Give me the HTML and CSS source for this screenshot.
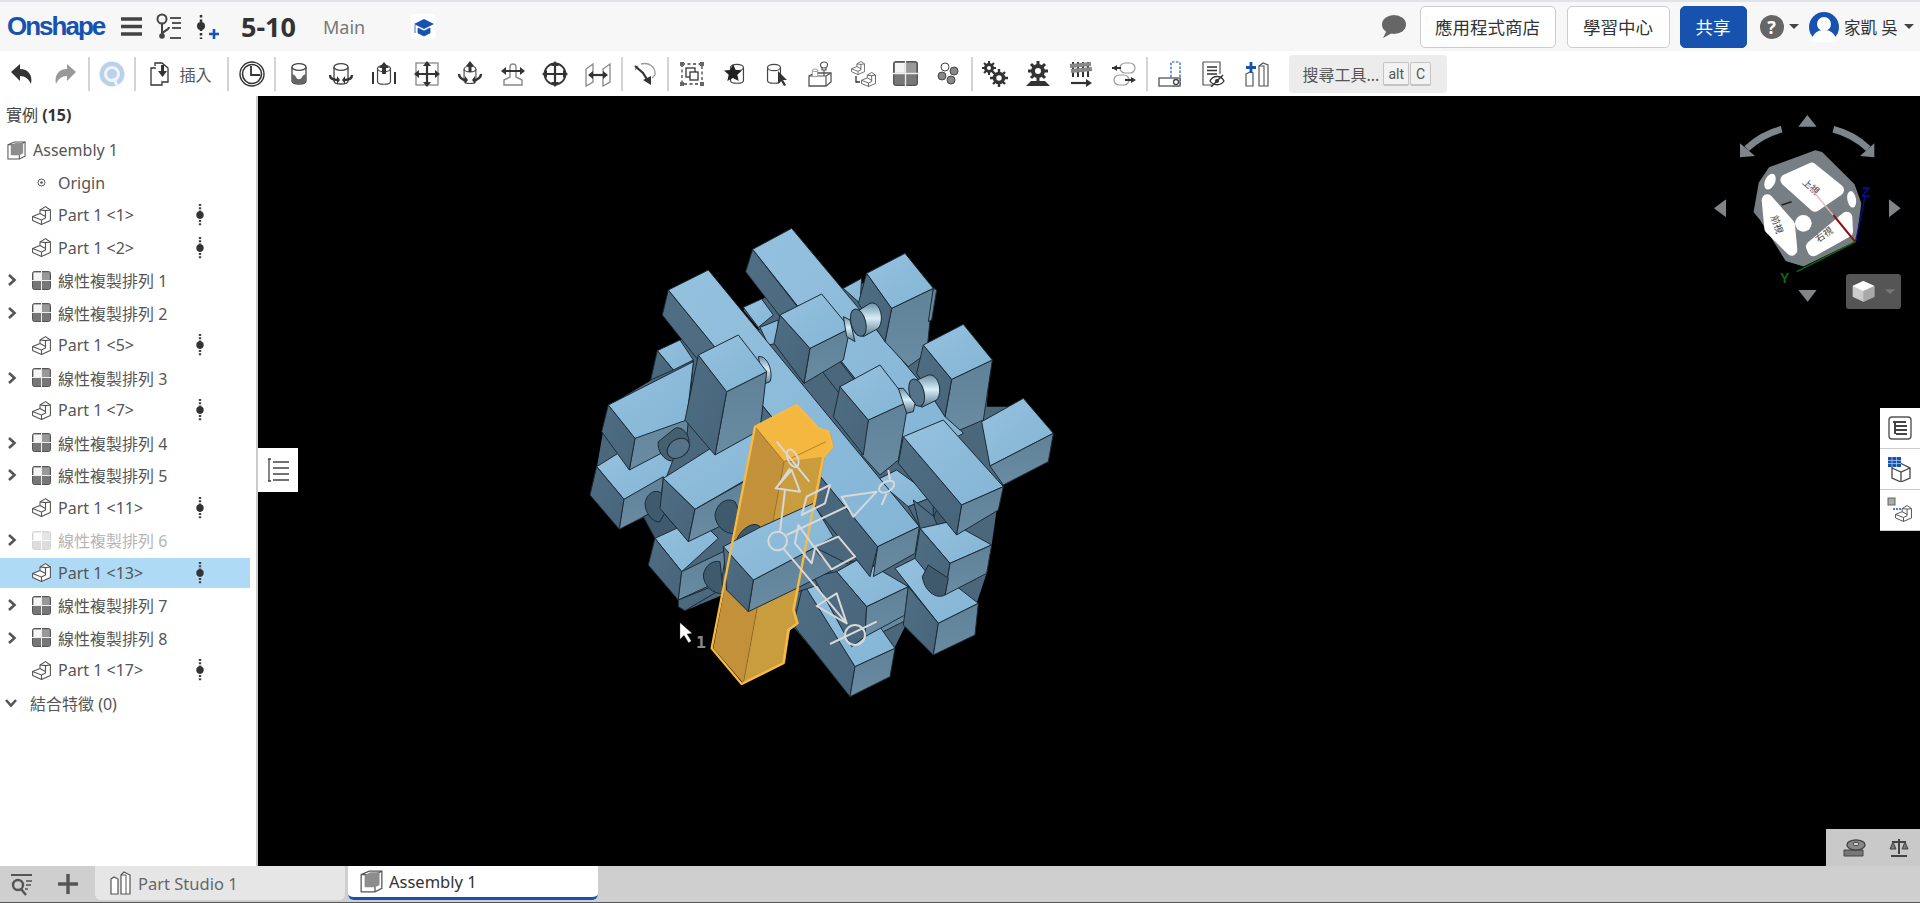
FILE: index.html

```html
<!DOCTYPE html>
<html lang="zh-Hant">
<head>
  <meta charset="UTF-8">
  <title>5-10 | Onshape</title>
  <meta name="viewport" content="width=device-width, initial-scale=1.0">
  <link rel="stylesheet" href="styles.css">
</head>
<body>
  <!-- shared icons -->
  <svg class="defs" width="0" height="0">
    <symbol id="i-part" viewBox="0 0 19 19">
      <path d="M.6 10.500 8 7.500V4L13.500.6 18.400 4v10.500L9.500 18.400.6 14.500z" fill="#fff" stroke="#555" stroke-width="1.100" stroke-linejoin="round"/>
      <path d="M.6 10.500 9.500 14v4.400M9.500 14l4-2V4.600L8 4M13.500 4.600 18.400 4M8 7.500l5.500 3" fill="none" stroke="#555" stroke-width="1.100"/>
    </symbol>
    <symbol id="i-pattern" viewBox="0 0 19 19">
      <rect x=".5" y=".5" width="18" height="18" rx="2" fill="#777" stroke="#555"/>
      <rect x="1.500" y="1.500" width="7.500" height="7.500" fill="#f4f4f4"/>
      <rect x="10" y="1.500" width="7.500" height="7.500" fill="#999"/>
      <path d="M9.500 0v19M0 9.500h19" stroke="#eee" stroke-width="1"/>
    </symbol>
    <symbol id="i-dots" viewBox="0 0 8 24">
      <path d="M4 1v22" stroke="#444" stroke-width="2.400" stroke-dasharray="2 1.200"/>
      <circle cx="4" cy="12" r="3.700" fill="#333"/>
    </symbol>
    <symbol id="i-chev" viewBox="0 0 10 14">
      <path d="M2 2l5.500 5L2 12" fill="none" stroke="#555" stroke-width="2.600"/>
    </symbol>
    <symbol id="i-cyl" viewBox="0 0 26 26">
      <path d="M6 6v14c0 4 14 4 14 0V6" fill="#fff" stroke="#444" stroke-width="1.300"/>
      <ellipse cx="13" cy="6" rx="7" ry="3.400" fill="#fff" stroke="#444" stroke-width="1.300"/>
    </symbol>
    <symbol id="i-asm" viewBox="0 0 20 20">
      <path d="M1 4 8 1h11v15l-6 3H1z" fill="#fff" stroke="#555" stroke-width="1.100"/>
      <path d="M1 4h12v15M13 4l6-3" fill="none" stroke="#555" stroke-width="1.100"/>
      <path d="M4 4.500 9 2h8v11l-4 2H4z" fill="#8d8d8d"/>
    </symbol>
  </svg>

  <header class="topbar">
    <span class="logo">Onshape</span>
    <svg class="ic menu" viewBox="0 0 21 19"><path d="M0 2h21M0 9.500h21M0 17h21" stroke="#444" stroke-width="3.400"/></svg>
    <svg class="ic versions" viewBox="0 0 25 28"><circle cx="6" cy="6" r="4.500" fill="none" stroke="#444" stroke-width="2"/><path d="M6 11v11c0-5 7-4 7-8" fill="none" stroke="#444" stroke-width="2"/><circle cx="6" cy="23" r="2.800" fill="#444"/><path d="M14 5h11M16 10h9M16 15h9M14 25h11" stroke="#555" stroke-width="2"/></svg>
    <svg class="ic insertable" viewBox="0 0 22 28"><path d="M4 2v24" stroke="#333" stroke-width="2.500" stroke-dasharray="2.500 2"/><circle cx="4" cy="13" r="4" fill="#333"/><path d="M17 16v10M12 21h10" stroke="#1652ae" stroke-width="2.600"/></svg>
    <span class="doc-name">5-10</span>
    <span class="branch">Main</span>
    <span class="cap-wrap">
      <svg viewBox="0 0 22 22" width="22" height="22"><path d="M11 3 1 8l10 5 10-5z" fill="#1652ae"/><path d="M5 12v5l6 3 6-3v-5l-6 3zM2 9v8" fill="#1652ae" stroke="#1652ae" stroke-width=".8"/></svg>
    </span>
    <div class="top-right">
      <svg class="chat" viewBox="0 0 24 24"><ellipse cx="12" cy="9.500" rx="12" ry="9.500" fill="#666"/><path d="M5 15 1 23l9-5z" fill="#666"/></svg>
      <button class="btn store">應用程式商店</button>
      <button class="btn learn">學習中心</button>
      <button class="btn share">共享</button>
      <span class="help">?</span>
      <span class="caret"></span>
      <svg class="avatar" viewBox="0 0 30 30"><circle cx="15" cy="15" r="15" fill="#1652ae"/><circle cx="15" cy="12" r="7" fill="#fff"/><path d="M3 30c0-9 6-12 12-12s12 3 12 12z" fill="#fff"/></svg>
      <span class="user">家凱 吳</span>
      <span class="caret"></span>
    </div>
  </header>

  <nav class="toolbar">
    <button class="tool"><svg viewBox="0 0 26 26"><path d="M2 11l9-8v5c8 0 13 6 11 15-2-5-6-8-11-8v5z" fill="#333"/></svg></button>
    <button class="tool"><svg viewBox="0 0 26 26"><path d="M24 11l-9-8v5C7 8 2 14 4 23c2-5 6-8 11-8v5z" fill="#999"/></svg></button>
    <i class="sep"></i>
    <button class="tool"><svg viewBox="0 0 26 26"><circle cx="13" cy="13" r="12.500" fill="#b9d1ea"/><circle cx="13" cy="13" r="6.500" fill="none" stroke="#eef4fa" stroke-width="3"/><path d="M15 17l3 8" stroke="#eef4fa" stroke-width="3"/></svg></button>
    <i class="sep"></i>
    <button class="tool insert">
      <svg viewBox="0 0 26 26"><path d="M4 7h6l5 5v12H4z" fill="#fff" stroke="#333" stroke-width="1.300"/><path d="M8 5V2h7l6 5v14h-6" fill="#fff" stroke="#333" stroke-width="1.300"/><path d="M14 4v6h-3l4.500 6 4.500-6h-3V4z" fill="#333"/></svg>
      <span>插入</span>
    </button>
    <i class="sep"></i>
    <button class="tool"><svg viewBox="0 0 26 26"><circle cx="13" cy="13" r="12" fill="#fff" stroke="#333" stroke-width="1.400"/><circle cx="13" cy="13" r="9.500" fill="none" stroke="#333" stroke-width="1.600"/><path d="M12 5v9h9" fill="none" stroke="#333" stroke-width="1.800"/></svg></button>
    <i class="sep"></i>
    <button class="tool"><svg viewBox="0 0 26 26"><use href="#i-cyl"/><path d="M6 13c2 1 3 1 4 3 1 3 5 3 6 0 1-2 2-2 4-3v7c0 4-14 4-14 0z" fill="#666"/></svg></button>
    <button class="tool"><svg viewBox="0 0 26 26"><use href="#i-cyl"/><path d="M2 14c0 3 3 5 8 5M24 14c0 3-3 5-8 5" fill="none" stroke="#333" stroke-width="2.400"/><path d="M9 15v8l3-4zM17 15v8l-3-4z" fill="#333"/></svg></button>
    <button class="tool"><svg viewBox="0 0 26 26"><use href="#i-cyl" x="1" y="2" width="24" height="24"/><path d="M13 1l5 6h-3v6h-4V7H8z" fill="#333"/><path d="M2 11v12M24 11v12" stroke="#333" stroke-width="2"/></svg></button>
    <button class="tool"><svg viewBox="0 0 26 26"><rect x="2" y="2" width="22" height="22" fill="#fff" stroke="#888" stroke-width="1.300"/><path d="M13 4v18M4 13h18" stroke="#333" stroke-width="2.200"/><path d="M13 0l4 5H9zM13 26l4-5H9zM0 13l5-4v8zM26 13l-5-4v8z" fill="#333"/></svg></button>
    <button class="tool"><svg viewBox="0 0 26 26"><use href="#i-cyl" x="2" y="3" width="22" height="22"/><path d="M13 0l4 5h-2.500v6h-3V5H9z" fill="#333"/><path d="M2 13c0 3 3 6 7 6M24 13c0 3-3 6-7 6" fill="none" stroke="#333" stroke-width="2.400"/><path d="M8 15v8l3-4zM18 15v8l-3-4z" fill="#333"/></svg></button>
    <button class="tool"><svg viewBox="0 0 26 26"><path d="M10 16V6a3 3 0 0 1 6 0v10l6 3v5H4v-5z" fill="#fff" stroke="#888" stroke-width="1.400"/><path d="M3 10h20" stroke="#333" stroke-width="2"/><path d="M1 10l5-4v8zM25 10l-5-4v8z" fill="#333"/></svg></button>
    <button class="tool"><svg viewBox="0 0 26 26"><circle cx="13" cy="13" r="10.500" fill="none" stroke="#333" stroke-width="1.800"/><path d="M13 3v20M3 13h20" stroke="#333" stroke-width="2.200"/><path d="M13 0l4 5H9zM13 26l4-5H9zM0 13l5-4v8zM26 13l-5-4v8z" fill="#333"/></svg></button>
    <button class="tool"><svg viewBox="0 0 26 26"><path d="M1 8l7-5v18l-7 4zM25 3l-7 5v17l7-4z" fill="#fff" stroke="#888" stroke-width="1.300"/><path d="M6 14h14" stroke="#333" stroke-width="2.200"/><path d="M3 14l5-4v8zM23 14l-5-4v8z" fill="#333"/></svg></button>
    <i class="sep"></i>
    <button class="tool"><svg viewBox="0 0 26 26"><path d="M9 3c8-2 15 3 14 11l-3 3M6 5 3 9" fill="none" stroke="#999" stroke-width="1.300"/><path d="M3 5l8 7 5 8" fill="none" stroke="#333" stroke-width="2.200"/><path d="M11 19l8 5 0-9z" fill="#333"/></svg></button>
    <i class="sep"></i>
    <button class="tool"><svg viewBox="0 0 26 26"><rect x="3" y="3" width="20" height="20" fill="none" stroke="#444" stroke-width="1.300" stroke-dasharray="3 2.500"/><path d="M1 1h4v4H1zM21 1h4v4h-4zM1 21h4v4H1zM21 21h4v4h-4z" fill="#666"/><rect x="7" y="7" width="9" height="9" fill="#fff" stroke="#333" stroke-width="1.300"/><rect x="11" y="11" width="8" height="8" fill="#fff" stroke="#333" stroke-width="1.300"/></svg></button>
    <button class="tool"><svg viewBox="0 0 26 26"><use href="#i-cyl" x="3" y="0" width="24" height="26"/><path d="M11 3l2.700 6 6.300.600-4.700 4.200 1.400 6.200L11 17l-5.700 3 1.400-6.200L2 9.600 8.300 9z" fill="#222"/></svg></button>
    <button class="tool"><svg viewBox="0 0 26 26"><use href="#i-cyl" x="-2" y="0" width="24" height="26"/><path d="M14 10l0 13 3-3 3 5 2-1-3-5h4z" fill="#333"/></svg></button>
    <button class="tool"><svg viewBox="0 0 26 26"><path d="M2 15l6-3h16v9l-5 4H2z" fill="#fff" stroke="#555" stroke-width="1.300"/><path d="M2 15h17v10M19 15l5-3" fill="none" stroke="#555" stroke-width="1.200"/><use href="#i-cyl" x="3" y="7" width="10" height="10"/><ellipse cx="17" cy="4" rx="3.500" ry="3" fill="#fff" stroke="#555" stroke-width="1.200"/><path d="M15 6v3h4V6M17 9v6" fill="none" stroke="#555" stroke-width="1.200"/></svg></button>
    <button class="tool"><svg viewBox="0 0 26 26"><use href="#i-part" x="1" y="0" width="14" height="14"/><use href="#i-part" x="11" y="11" width="15" height="15"/><path d="M6 15v6h4" fill="none" stroke="#333" stroke-width="1.300"/></svg></button>
    <button class="tool"><svg viewBox="0 0 26 26"><use href="#i-pattern" width="25" height="25"/></svg></button>
    <button class="tool"><svg viewBox="0 0 26 26"><circle cx="9" cy="6" r="4" fill="#fff" stroke="#444"/><circle cx="18" cy="10" r="4" fill="#888" stroke="#444"/><circle cx="6" cy="15" r="4" fill="#888" stroke="#444"/><circle cx="15" cy="19" r="4" fill="#888" stroke="#444"/></svg></button>
    <i class="sep"></i>
    <button class="tool"><svg viewBox="0 0 26 26"><g fill="none" stroke="#333"><circle cx="7" cy="7" r="3.500" stroke-width="3"/><path d="M7 0v3M7 11v3M0 7h3M11 7h3M2 2l2 2M10 10l2 2M12 2l-2 2M4 10l-2 2" stroke-width="2"/><circle cx="17" cy="17" r="4.500" stroke-width="3.600"/><path d="M17 8v3M17 23v3M8 17h3M23 17h3M11 11l2 2M21 21l2 2M23 11l-2 2M13 21l-2 2" stroke-width="2.400"/></g></svg></button>
    <button class="tool"><svg viewBox="0 0 26 26"><g fill="none" stroke="#333"><circle cx="13" cy="10" r="5" stroke-width="4"/><path d="M13 0v4M13 16v4M3 10h4M19 10h4M6 3l3 3M17 14l3 3M20 3l-3 3M9 14l-3 3" stroke-width="3"/></g><path d="M1 25l5-5h14l5 5z" fill="#333"/></svg></button>
    <button class="tool"><svg viewBox="0 0 26 26"><path d="M5 1v15M10 1v15M15 1v15M20 1v15" stroke="#333" stroke-width="2"/><path d="M2 5l21-2M3 10l21-2" stroke="#888" stroke-width="4"/><path d="M3 22h16" stroke="#333" stroke-width="2.200"/><path d="M24 22l-6-4v8z" fill="#333"/></svg></button>
    <button class="tool"><svg viewBox="0 0 26 26"><rect x="9" y="2" width="15" height="10" rx="5" fill="#fff" stroke="#999" stroke-width="1.200"/><rect x="3" y="14" width="15" height="10" rx="5" fill="#fff" stroke="#999" stroke-width="1.200"/><path d="M1 7h9M14 19h9" stroke="#333" stroke-width="2"/><path d="M1 7l5-3v6zM25 19l-5-3v6z" fill="#333"/></svg></button>
    <i class="sep"></i>
    <button class="tool"><svg viewBox="0 0 26 26"><rect x="13" y="1" width="9" height="24" rx="1" fill="none" stroke="#1652ae" stroke-width="1.200" stroke-dasharray="2.500 1.500"/><rect x="1" y="17" width="21" height="8" fill="#fff" stroke="#555" stroke-width="1.300"/><circle cx="18" cy="21" r="2.500" fill="none" stroke="#444" stroke-width="1.300"/></svg></button>
    <button class="tool"><svg viewBox="0 0 26 26"><path d="M3 1h17v12M3 1v23h9" fill="#fff" stroke="#555" stroke-width="1.200"/><path d="M7 6h10M7 9.500h10M7 13h10" stroke="#333" stroke-width="1.500"/><path d="M10 20c3-6 11-6 14 0-3 5-11 5-14 0z" fill="#fff" stroke="#333" stroke-width="1.300"/><circle cx="17" cy="20" r="2" fill="#333"/><path d="M11 26l12-12" stroke="#333" stroke-width="1.400"/></svg></button>
    <button class="tool"><svg viewBox="0 0 26 26"><path d="M16 5l4-3 5 2v21h-9z" fill="#fff" stroke="#555" stroke-width="1.200"/><path d="M3 13l4-2 3 1v13H3z" fill="#fff" stroke="#555" stroke-width="1.200"/><path d="M16 5h5v20" fill="none" stroke="#555" stroke-width="1.100"/><path d="M8 1v11M3 6.500h10" stroke="#1652ae" stroke-width="2.800"/></svg></button>
    <div class="search">
      <span>搜尋工具...</span>
      <kbd>alt</kbd><kbd class="key-c">C</kbd>
    </div>
  </nav>

  <main class="workspace">
    <aside class="panel">
      <div class="panel-title">實例 <b>(15)</b></div>
      <div class="row row-top"><span></span><svg class="tree-ic"><use href="#i-asm"/></svg><span>Assembly 1</span></div>
      <div class="row"><span></span><svg class="tree-ic" viewBox="0 0 19 19"><circle cx="9.500" cy="9.500" r="3.500" fill="none" stroke="#555"/><circle cx="9.500" cy="9.500" r="1.300" fill="#555"/></svg><span>Origin</span></div>
      <div class="row"><span></span><svg class="tree-ic"><use href="#i-part"/></svg><span>Part 1 &lt;1&gt;</span><svg class="dots"><use href="#i-dots"/></svg></div>
      <div class="row"><span></span><svg class="tree-ic"><use href="#i-part"/></svg><span>Part 1 &lt;2&gt;</span><svg class="dots"><use href="#i-dots"/></svg></div>
      <div class="row"><svg class="chev"><use href="#i-chev"/></svg><svg class="tree-ic"><use href="#i-pattern"/></svg><span>線性複製排列 1</span></div>
      <div class="row"><svg class="chev"><use href="#i-chev"/></svg><svg class="tree-ic"><use href="#i-pattern"/></svg><span>線性複製排列 2</span></div>
      <div class="row"><span></span><svg class="tree-ic"><use href="#i-part"/></svg><span>Part 1 &lt;5&gt;</span><svg class="dots"><use href="#i-dots"/></svg></div>
      <div class="row"><svg class="chev"><use href="#i-chev"/></svg><svg class="tree-ic"><use href="#i-pattern"/></svg><span>線性複製排列 3</span></div>
      <div class="row"><span></span><svg class="tree-ic"><use href="#i-part"/></svg><span>Part 1 &lt;7&gt;</span><svg class="dots"><use href="#i-dots"/></svg></div>
      <div class="row"><svg class="chev"><use href="#i-chev"/></svg><svg class="tree-ic"><use href="#i-pattern"/></svg><span>線性複製排列 4</span></div>
      <div class="row"><svg class="chev"><use href="#i-chev"/></svg><svg class="tree-ic"><use href="#i-pattern"/></svg><span>線性複製排列 5</span></div>
      <div class="row"><span></span><svg class="tree-ic"><use href="#i-part"/></svg><span>Part 1 &lt;11&gt;</span><svg class="dots"><use href="#i-dots"/></svg></div>
      <div class="row row-off"><svg class="chev"><use href="#i-chev"/></svg><svg class="tree-ic"><use href="#i-pattern"/></svg><span>線性複製排列 6</span></div>
      <div class="row row-sel"><span></span><svg class="tree-ic"><use href="#i-part"/></svg><span>Part 1 &lt;13&gt;</span><svg class="dots"><use href="#i-dots"/></svg></div>
      <div class="row"><svg class="chev"><use href="#i-chev"/></svg><svg class="tree-ic"><use href="#i-pattern"/></svg><span>線性複製排列 7</span></div>
      <div class="row"><svg class="chev"><use href="#i-chev"/></svg><svg class="tree-ic"><use href="#i-pattern"/></svg><span>線性複製排列 8</span></div>
      <div class="row"><span></span><svg class="tree-ic"><use href="#i-part"/></svg><span>Part 1 &lt;17&gt;</span><svg class="dots"><use href="#i-dots"/></svg></div>
      <div class="row row-mates"><svg class="chev chev-down"><use href="#i-chev"/></svg><span>結合特徵 (0)</span></div>
    </aside>

    <section class="viewport">
      <button class="list-tab"><svg viewBox="0 0 22 24" width="22" height="24"><path d="M1 1h3M1 23h3M2 1v22M6 4h16M6 10h16M6 16h16M6 22h16" stroke="#444" stroke-width="1.300" fill="none"/></svg></button>

      <svg class="scene" viewBox="0 0 1662 770">
        <defs>
          <linearGradient id="g-top" x1="0" y1="0" x2="1" y2="1"><stop offset="0" stop-color="#94c1de"/><stop offset="1" stop-color="#84b5d5"/></linearGradient>
          <linearGradient id="g-lf" x1="0" y1="0" x2="1" y2="1"><stop offset="0" stop-color="#4f6e83"/><stop offset="1" stop-color="#47647a"/></linearGradient>
          <linearGradient id="g-rt" x1="0" y1="0" x2="0" y2="1"><stop offset="0" stop-color="#5f8299"/><stop offset="1" stop-color="#6a8ca2"/></linearGradient>
          <linearGradient id="g-cyl" x1="0" y1="0" x2="0" y2="1"><stop offset="0" stop-color="#6d93ab"/><stop offset=".45" stop-color="#d8eef8"/><stop offset="1" stop-color="#55768c"/></linearGradient>
        </defs>
        <g transform="translate(322 124) scale(.33333)">
          <!-- fills the pockets between parts -->
          <path class="backing" d="M540 330 490 270 560 230 640 240 850 190 1050 220 1030 390 1130 330 1230 420 1220 560 1330 560 1400 700 1270 780 1250 870 1235 975 1220 1060 1190 1150 1060 1300 985 1200 945 1280 930 1360 810 1420 640 1220 620 1180 440 1120 320 1170 295 1140 205 1035 225 955 240 870 120 925 35 825 50 745 70 630 90 555 215 480 232 392 300 360z"/>

          <!-- low parts, coordinates shifted down by 660 -->
          <g transform="translate(0 660)">
            <path class="top" d="M890 120l60-30 110 80-75 30z"/>
            <path class="lf" d="M985 200l75-30v80l-40 15z"/>
            <path class="lf" d="M1000 180l130 105-20 85-90-105z"/>
            <path class="rt" d="M800 390l190 50-10 100-140 70-60-80z"/>
            <path class="dk" d="M1062 230c10 40 50 70 75 50l10-60-70-30zM1027 410c5 40 40 70 68 55l10-50-60-40zM810 365c0 30 40 55 75 42l-10-50zM775 555c0 20 10 35 25 40l30-50z"/>
            <path class="top" d="M660 430l120-40 165 235-120 55z"/><path class="lf" d="M640 555l30-125 155 250-15 90z"/><path class="rt" d="M825 680l-15 90 120-60 15-85z"/>
            <path class="lf" d="M640 290l240 120-80-10-100 40-60 20z"/>
            <path class="dk" d="M810 365c0 30 40 55 75 42l-10-50z"/>
            <path class="top" d="M770 395l70-40 145 85-125 60z"/><path class="lf" d="M700 410l70-15 90 105-5 90-40 30z"/><path class="rt" d="M860 500l-5 90 120-65 10-85z"/>
            <path class="top" d="M945 385l70-35 180 140-120 60z"/><path class="lf" d="M985 440l-15 115 90 90 15-95z"/><path class="rt" d="M1075 550l-15 95 125-60 10-95z"/>
            <path class="top" d="M1020 265l90-20 125 70-125 55z"/><path class="lf" d="M1020 265l-15 90 90 110 15-95z"/><path class="rt" d="M1110 370l-15 95 125-65 15-85z"/>
            <path class="dk" d="M1027 410c5 40 40 70 68 55l10-50-60-40z"/>
            <path class="top" d="M50 80l80-50h160l-30 80-128 68z"/><path class="lf" d="M50 80 30 165l88 103 14-90z"/><path class="rt" d="M132 178l-14 90 122-63 10-95z"/>
            <path class="dk" d="M240 205l85 100-100-10-35-65z"/>
            <path class="dk" d="M195 190c5-30 30-45 50-30l20 40-25 45c-20 5-45-25-45-55z"/>
            <path class="top" d="M225 295l130-60 60 60-110 100z"/><path class="lf" d="M225 295l-20 80 90 105 10-85z"/><path class="rt" d="M305 395l-10 85 130-60 15-90z"/>
            <path class="lf" d="M295 480l125-50v20l-105 62-20-12z"/>
            <path class="dk" d="M370 405c5-30 30-45 50-40l10 95c-30 5-60-25-60-55z"/>
            <path class="top" d="M250 115 400 20l140-60 60 100-255 148z"/><path class="lf" d="M250 115l-10 90 85 100 20-97z"/><path class="rt" d="M345 208l-20 97 165-80 20-110z"/>
            <path class="dk" d="M405 225c5-35 35-55 60-40l20 45-20 50c-30 5-60-25-60-55z"/>
          </g>

          <!-- back bars -->
          <path class="top" d="M790 205l55-30-5 75z"/>
          <path class="top" d="M490 262l55-25 35 48-45 37zM540 322l55-22-5 70-25 5z"/>
          <path class="lf" d="M518 88l-21 67 353 460 20-75z"/>
          <path class="top" d="M518 88 635 25l515 615-135 75z"/>
          <path class="top" d="M232 392l68-32 40 60-60 30z"/><path class="lf" d="M232 392l-20 88 68-30z"/>
          <path class="rt" d="M935 265l-20 100 70 75 55-40 20-195z"/><path class="lf" d="M860 160l-25 90 80 115 20-100z"/><path class="top" d="M860 160 975 100l85 105-125 60z"/>
          <path class="rt" d="M1060 205l10 5-15 90-10 5z"/>
          <path class="cyl" d="M815 285l55-35c30-10 45 50 25 75l-45 25z"/>
          <ellipse class="cyl-end" cx="835" cy="308" rx="22" ry="42" transform="rotate(-15 835 308)"/>

          <!-- main long bars -->
          <path class="lf" d="M265 210l-18 75 623 785 23-90z"/>
          <path class="top" d="M265 210 385 150l633 770-125 60z"/>
          <path class="rt" d="M893 980l-13 90 125-70 13-80z"/>
          <path class="top" d="M1205 605l125-70 90 105-190 98z"/><path class="rt" d="M1420 640l-15 85-135 70-40-57z"/>
          <path class="lf" d="M970 650l-15 80 175 215 15-90z"/>
          <path class="top" d="M970 650l120-50 180 200-125 55z"/>
          <path class="rt" d="M1145 855l-15 90 125-75 15-70z"/>

          <!-- posts and pins -->
          <path class="rt" d="M690 385l-18 105 118-70 20-95z"/><path class="lf" d="M600 285l-18 85 90 120 18-105z"/><path class="top" d="M600 285 725 222l85 103-120 60z"/>
          <path class="cyl" d="M810 300l-20-10 10 60 25 15z"/>
          <path class="rt" d="M1115 478l-20 112 45 40 70-30 27-180z"/><path class="lf" d="M1030 375l-20 85 85 130 20-112z"/><path class="top" d="M1030 375l120-62 87 107-122 58z"/>
          <path class="cyl" d="M990 490l55-25c30-5 45 50 25 75l-45 22z"/>
          <ellipse class="cyl-end" cx="1010" cy="518" rx="22" ry="42" transform="rotate(-15 1010 518)"/>
          <path class="rt" d="M865 600l-20 105 55 60 55-45 30-175z"/><path class="lf" d="M780 500l-20 90 90 115 15-105z"/><path class="top" d="M780 500l120-65 85 110-120 55z"/>
          <path class="cyl" d="M970 505l-15 0 25 75 20-5 5-25z"/>

          <path class="cyl" d="M535 410c30-5 45 50 35 75l-20 8z"/>
          <path class="rt" d="M165 655l-17 95 172-90 20-240z"/><path class="lf" d="M85 555 65 635l83 115 17-95z"/><path class="top" d="M85 555 340 425l-20 175-155 55z"/>
          <path class="rt" d="M440 515l-35 190 135-75 20-175z"/><path class="lf" d="M355 405l-40 195 90 105 35-190z"/><path class="top" d="M355 405l120-60 85 110-120 60z"/>
          <path class="cyl-dk" d="M235 665l50-40c25-10 50 30 40 50l-50 48c-20 0-45-30-40-58z"/>
          <ellipse class="cyl-end" cx="295" cy="685" rx="36" ry="27" transform="rotate(-35 295 685)"/>

          <!-- selected part -->
          <path class="sel-front" d="M612 725 490 1390l125-60 15-100 27-20-12-40 90-460 27-30-12-45-30-10-82 100z"/>
          <path class="sel-side" d="M525 620 400 1285l90 105 122-665z"/>
          <path class="sel-top" d="M525 620 650 555l65 70 30 10 12 45-27 30-118 15z"/>
          <path class="sel-edge" d="M525 620l87 105 126-60M612 725 490 1390"/>

          <!-- bar crossing over the selected part -->
          <g transform="translate(0 660)">
            <path class="dk" d="M470 300c10-30 50-60 70-40l-20 40-60 30z"/>
            <path class="rt" d="M520 420l-15 95 135-65 120-60-60-65z"/>
            <path class="lf" d="M430 320l10 130 65 65 15-95z"/>
            <path class="top" d="M430 320l110-58 160-72 60 100-60 35-180 95z"/>
          </g>
          <path class="sel-outline" d="M525 620l125-65 65 70 30 10 12 45-27 30-90 460 12 40-27 20-15 100-125 62-90-107z"/>

          <!-- manipulator and cursor -->
          <g transform="translate(0 660)">
            <g class="gizmo">
              <circle cx="593" cy="303" r="28"/>
              <path d="M600 275l15-125M635 90l25 65-73-10zM590 5l98 120M630 85l-35 50"/>
              <ellipse cx="638" cy="55" rx="15" ry="28" transform="rotate(-25 638 55)"/>
              <path d="M620 285l180-85M785 170l105-15-70 75zM925 90l5 30M905 195l15-35"/>
              <ellipse cx="920" cy="140" rx="25" ry="15" transform="rotate(-30 920 140)"/>
              <path d="M610 325l190 225M770 460l-60 38 90 52zM750 612l140-67"/>
              <circle cx="825" cy="585" r="30"/>
              <path d="M680 170l70-35-15 55-70 35zM705 320l70-30 50 60-70 38zM655 255l50 70-10 45-50-60z"/>
            </g>
            <path class="cursor" d="M300 548v50l12-12 14 22 8-5-13-21 15-2z"/>
            <text class="cursor-num" x="348" y="624">1</text>
          </g>
        </g>
      </svg>

      <svg class="cube-nav" viewBox="0 0 690 660">
        <g class="nav-arrow">
          <path d="M352 45l-27 35h55zM325 570h55l-27 35zM72 325l36-27v54zM632 325l-35-27v54zM150 130v42l45-4zM553 130v42l-43-4z"/>
          <path class="nav-curve" d="M275 88c-40 10-75 30-105 58M430 88c40 10 75 30 105 58"/>
        </g>
        <path class="cube-body" d="M240 205l135-50 20 5 95 95 20 55-15 110-155 75-50-15-75-120-20-25 15-85z"/>
        <g class="cube-face">
          <path d="M288 240l77-35 80 65-70 48zM232 300l66 75 7 75-65-65zM365 440l105-88 2 43-102 57z"/>
        </g>
        <g class="cube-dot">
          <circle cx="340" cy="370" r="25"/>
          <ellipse cx="240" cy="245" rx="15" ry="25" transform="rotate(25 240 245)"/>
          <ellipse cx="485" cy="298" rx="13" ry="25" transform="rotate(-10 485 298)"/>
        </g>
        <path d="M275 315l30-10" stroke="#222" stroke-width="5"/>
        <text class="face-text" transform="translate(335 250) rotate(40)">上視</text>
        <text class="face-text" transform="translate(242 350) rotate(70)">前視</text>
        <text class="face-text" transform="translate(385 428) rotate(-35)">右視</text>
        <path d="M350 250l100 120" stroke="#e8b6b6" stroke-width="4"/>
        <path d="M430 345l65 80" stroke="#8a1414" stroke-width="6"/>
        <path d="M497 425l28-135" stroke="#0a0a96" stroke-width="4"/>
        <path d="M497 425l-177 90" stroke="#0b6b0b" stroke-width="4"/>
        <text class="axis axis-z" x="515" y="290">Z</text>
        <text class="axis axis-y" x="270" y="550">Y</text>
        <rect x="468" y="522" width="165" height="105" rx="10" fill="#555"/>
        <path d="M520 543l33 15v32l-33 15-32-15v-32z" fill="#ccc"/>
        <path d="M520 543l33 15-33 15-32-15z" fill="#fff"/>
        <path d="M520 573l33-15v32l-33 15z" fill="#a9a9a9"/>
        <path d="M585 568h30l-15 14z" fill="#777"/>
      </svg>

      <div class="side-tabs">
        <button class="side-tab"><svg viewBox="0 0 24 24" width="24" height="24"><rect x="1" y="1" width="22" height="22" rx="3" fill="none" stroke="#555" stroke-width="1.400"/><path d="M5 6h13M8 10h11M8 14h11M8 18h11M7 6v12" stroke="#444" stroke-width="2"/></svg></button>
        <button class="side-tab"><svg viewBox="0 0 26 26" width="26" height="26"><path d="M13 7l10 5v10l-9 4-9-4V11z" fill="#fff" stroke="#444" stroke-width="1.300"/><path d="M5 12l9 4 9-4M14 16v10" fill="none" stroke="#444" stroke-width="1.300"/><rect x="1" y="1" width="13" height="10" fill="#1652ae"/><path d="M1 4.500h13M1 7.500h13M5 1v10M9.500 1v10" stroke="#a9c4ea" stroke-width=".8"/></svg></button>
        <button class="side-tab"><svg viewBox="0 0 26 26" width="26" height="26"><rect x="1" y="1" width="7" height="7" fill="#aaa" stroke="#666"/><path d="M6 12h10" stroke="#4d7fcf" stroke-width="2" stroke-dasharray="2 1"/><use href="#i-part" x="8" y="8" width="17" height="17"/></svg></button>
      </div>

      <div class="measure">
        <svg viewBox="0 0 24 18" width="24" height="18"><path d="M2 11h19v6H2z" fill="#777" stroke="#444"/><ellipse cx="14" cy="6" rx="9" ry="5" fill="#888" stroke="#444" stroke-width="1.400"/><ellipse cx="14" cy="5" rx="3" ry="1.600" fill="#ddd" stroke="#444"/></svg>
        <svg viewBox="0 0 20 20" width="20" height="20"><path d="M10 1v15M3 4h14M2 18h16" stroke="#444" stroke-width="2"/><path d="M4 4 1 11h6zM16 4l-3 7h6z" fill="#777" stroke="#444"/></svg>
      </div>
    </section>
  </main>

  <footer class="tabbar">
    <svg class="tab-tool" viewBox="0 0 21 22" width="21" height="22"><path d="M0 1h21" stroke="#555" stroke-width="2"/><circle cx="7" cy="11" r="5" fill="none" stroke="#555" stroke-width="2.400"/><path d="M10 15l5 6" stroke="#555" stroke-width="2.400"/><path d="M15 7h6M15 11h5M14 15h3" stroke="#555" stroke-width="1.600"/></svg>
    <svg class="tab-plus" viewBox="0 0 20 20" width="20" height="20"><path d="M10 0v20M0 10h20" stroke="#555" stroke-width="3.400"/></svg>
    <div class="tab">
      <svg viewBox="0 0 22 24" width="22" height="24"><path d="M1 8l3-2 4 2v15H1zM11 4l3-3 6 3v19h-9z" fill="#fff" stroke="#555" stroke-width="1.200"/><path d="M11 4h5v19" fill="none" stroke="#555"/></svg>
      <span>Part Studio 1</span>
    </div>
    <div class="tab tab-active">
      <svg viewBox="0 0 20 20" width="23" height="23"><use href="#i-asm"/></svg>
      <span>Assembly 1</span>
    </div>
  </footer>
</body>
</html>
```

FILE: styles.css

```css
* { box-sizing: border-box; }
html, body { height: 100%; }
body {
  margin: 0;
  overflow: hidden;
  display: flex;
  flex-direction: column;
  font-family: "Noto Sans", "Noto Sans CJK TC", sans-serif;
  font-size: 14px;
  color: #555;
  background: #fff;
}
button { font: inherit; cursor: pointer; }
.defs { position: absolute; }

/* top bar */
.topbar {
  height: 51px;
  flex: none;
  display: flex;
  align-items: center;
  background: #f7f7f7;
  border-top: 2px solid #e2e3e8;
  padding-left: 7px;
}
.logo {
  width: 104px;
  font-family: "Liberation Sans", sans-serif;
  font-weight: bold;
  font-size: 26px;
  letter-spacing: -2px;
  color: #1652ae;
}
.ic { flex: none; }
.menu { width: 21px; height: 19px; margin: 0 0 0 10px; }
.versions { width: 25px; height: 28px; margin-left: 14px; }
.insertable { width: 22px; height: 28px; margin-left: 16px; }
.doc-name { width: 82px; margin-left: 22px; font-size: 27px; font-weight: bold; color: #333; }
.branch { width: 88px; font-size: 18px; color: #777; }
.cap-wrap {
  width: 25px;
  height: 25px;
  display: flex;
  align-items: center;
  justify-content: center;
  background: #fff;
  border-radius: 3px;
}
.top-right { margin-left: auto; display: flex; align-items: center; padding-right: 6px; }
.chat { width: 24px; height: 24px; margin-right: 14px; }
.btn {
  height: 42px;
  padding: 0;
  border: 1px solid #ccc;
  border-radius: 5px;
  background: #fff;
  color: #333;
  font-size: 17.500px;
}
.store { width: 136px; margin-right: 11px; }
.learn { width: 103px; margin-right: 10px; }
.share { width: 67px; background: #1652ae; border-color: #1652ae; color: #fff; margin-right: 13px; }
.help {
  width: 24px;
  height: 24px;
  border-radius: 50%;
  background: #666;
  color: #fff;
  font-weight: bold;
  font-size: 18px;
  line-height: 24px;
  text-align: center;
  margin-right: 5px;
}
.caret {
  width: 0;
  height: 0;
  border-left: 5px solid transparent;
  border-right: 5px solid transparent;
  border-top: 5px solid #444;
}
.avatar { width: 30px; height: 30px; margin: 0 5px 0 10.500px; }
.user { width: 60px; color: #333; font-size: 16.500px; white-space: nowrap; }

/* toolbar */
.toolbar {
  height: 45px;
  flex: none;
  display: flex;
  align-items: center;
  padding-left: 1px;
  background: #fff;
}
.tool {
  flex: none;
  width: 42.800px;
  height: 36px;
  padding: 0;
  border: 0;
  background: none;
  display: flex;
  align-items: center;
  justify-content: center;
}
.tool svg { width: 26px; height: 26px; }
.insert { width: 89px; justify-content: flex-start; padding-left: 10px; color: #555; font-size: 16px; }
.insert span { margin-left: 6px; }
.sep { flex: none; width: 2px; height: 34px; margin: 0 1px; background: #d4d4d4; }
.search {
  flex: none;
  width: 158px;
  height: 38px;
  margin-left: 11px;
  padding-left: 14px;
  display: flex;
  align-items: center;
  background: #ececec;
  border-radius: 4px;
  font-size: 16px;
  color: #555;
  white-space: nowrap;
}
kbd {
  height: 24px;
  margin-left: 4px;
  padding: 0 4px;
  font: 14px/22px "Roboto", sans-serif;
  border: 1px solid #c4c4c4;
  border-bottom-width: 2px;
  border-radius: 2px;
  background: #f2f2f2;
}
.key-c { margin-left: 1px; padding: 0 5px; }

/* workspace */
.workspace { flex: 1; min-height: 0; display: flex; }
.panel {
  flex: none;
  width: 258px;
  padding-top: 8px;
  background: #fff;
  border-right: 2px solid #ccc;
  white-space: nowrap;
}
.panel-title { height: 31px; line-height: 22px; padding-left: 6px; color: #444; font-size: 16px; }
.panel-title b { color: #333; font-weight: bold; }
.row {
  width: 250px;
  height: 30px;
  margin-bottom: 2.500px;
  display: grid;
  grid-template-columns: 32px 26px 132px 20px;
  align-items: center;
  font-size: 16px;
}
.row-top { grid-template-columns: 7px 26px 1fr; }
.row-off { color: #b5b5b5; }
.row-off .tree-ic { opacity: .25; }
.row-sel { background: #aedaf5; }
.row-mates { grid-template-columns: 30px 1fr; }
.tree-ic { width: 19px; height: 19px; }
.chev { width: 10px; height: 14px; margin-left: 7px; }
.chev-down { margin-left: 6px; transform: rotate(90deg); }
.dots { width: 8px; height: 24px; justify-self: center; }

/* 3d view */
.viewport { flex: 1; position: relative; background: #000; overflow: hidden; }
.scene { position: absolute; left: 0; top: 0; width: 1662px; height: 770px; }
.scene path, .scene ellipse { stroke-linejoin: round; }
.backing { fill: #4a677c; }
.top, .lf, .rt, .dk, .cyl, .cyl-dk, .cyl-end { stroke: #1c2a35; stroke-width: 3; }
.top { fill: url(#g-top); }
.lf { fill: url(#g-lf); }
.rt { fill: url(#g-rt); }
.dk { fill: #3f5a6d; }
.cyl { fill: url(#g-cyl); }
.cyl-dk { fill: #44606f; }
.cyl-end { fill: #557388; }
.sel-outline { fill: none; stroke: #f7bb45; stroke-width: 7; }
.sel-front { fill: #c99c3d; }
.sel-side { fill: #c3913a; }
.sel-top { fill: #f4b740; }
.sel-edge { fill: none; stroke: #8f6a28; stroke-width: 2; }
.gizmo { fill: none; stroke: #d8d8d8; stroke-width: 6; }
.cursor { fill: #fff; stroke: #444; stroke-width: 1; }
.cursor-num { font: bold 50px "DejaVu Sans Mono", monospace; fill: #8a8a8a; }

.cube-nav { position: absolute; left: 1432px; top: 4px; width: 230px; height: 220px; }
.nav-arrow { fill: #7e868b; }
.nav-curve { fill: none; stroke: #7e868b; stroke-width: 20; }
.cube-body { fill: #787f84; stroke: #787f84; stroke-width: 8; stroke-linejoin: round; }
.cube-face { fill: #fff; stroke: #fff; stroke-width: 34; stroke-linejoin: round; }
.cube-dot { fill: #fff; }
.face-text { font-size: 28px; fill: #444; font-family: "Noto Sans CJK TC", sans-serif; }
.axis { font: bold 42px "Liberation Sans", sans-serif; }
.axis-z { fill: #0a0a96; }
.axis-y { fill: #0b6b0b; }

.list-tab {
  position: absolute;
  left: 0;
  top: 352px;
  width: 40px;
  height: 44px;
  padding: 0;
  border: 0;
  background: #fff;
  display: flex;
  align-items: center;
  justify-content: center;
}
.side-tabs { position: absolute; right: 0; top: 312px; width: 40px; }
.side-tab {
  display: flex;
  align-items: center;
  justify-content: center;
  width: 40px;
  height: 41px;
  padding: 0;
  border: 0;
  border-bottom: 1px solid #ccc;
  background: #fff;
}
.measure {
  position: absolute;
  right: 0;
  bottom: 0;
  width: 94px;
  height: 37px;
  display: flex;
  align-items: center;
  justify-content: space-around;
  padding-left: 4px;
  background: #c9c9c9;
}

/* bottom tabs */
.tabbar {
  height: 37px;
  flex: none;
  display: flex;
  background: #cfcfcf;
  border-bottom: 1px solid #555;
}
.tab-tool { margin: 8px 0 0 11px; }
.tab-plus { margin: 8px 0 0 26px; }
.tab {
  width: 250px;
  height: 34px;
  margin-left: 17px;
  display: flex;
  align-items: center;
  gap: 6px;
  padding-left: 15px;
  background: #e6e6e6;
  border-radius: 0 0 6px 6px;
  font-size: 16.500px;
  color: #666;
}
.tab-active {
  margin-left: 3px;
  padding-left: 12px;
  background: #fff;
  border-bottom: 3px solid #1652ae;
  color: #333;
}
```
